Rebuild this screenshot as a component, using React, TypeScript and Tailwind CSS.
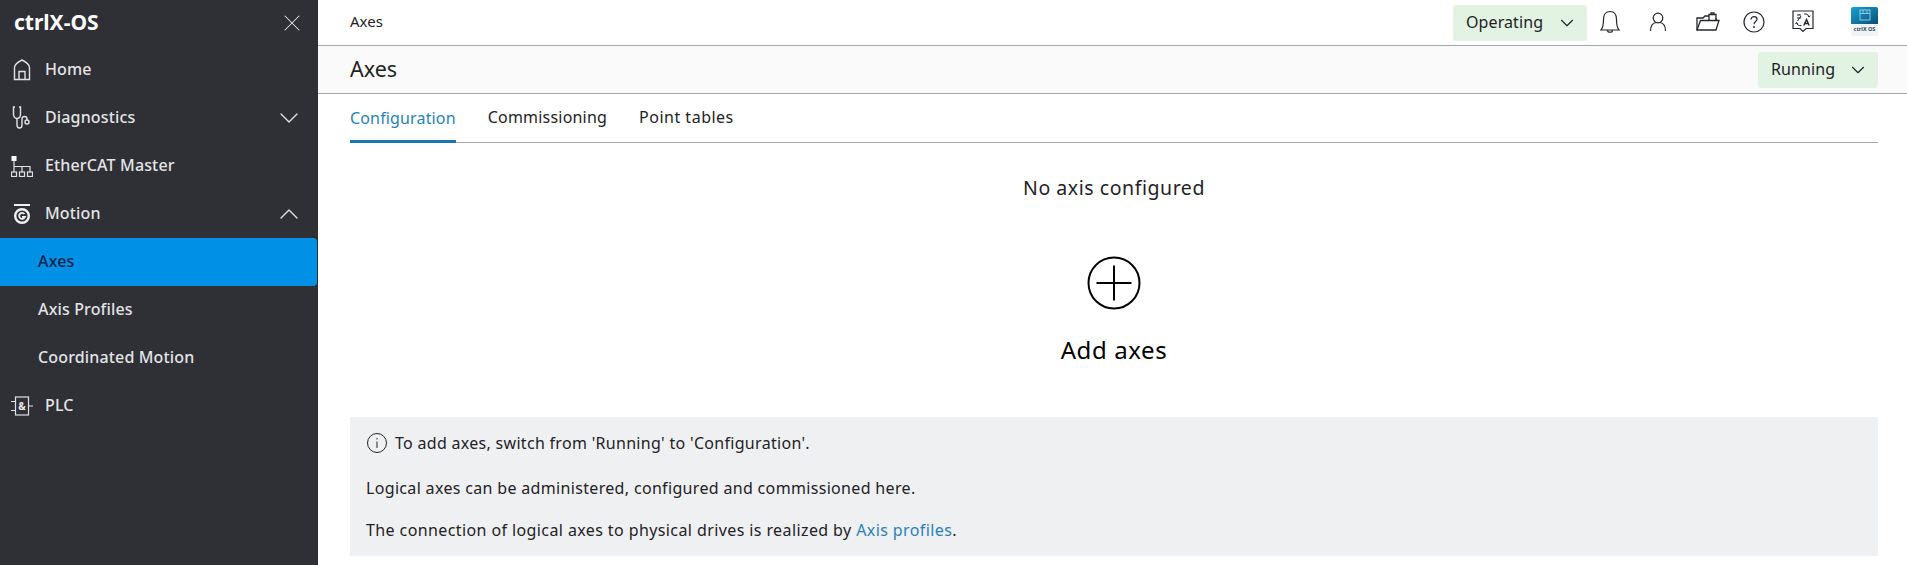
import React from "react";
import { ChevronDown, ChevronUp, X } from "lucide-react";

const font = "font-['Noto_Sans','Liberation_Sans',sans-serif]";

function HomeIcon() {
  return (
    <svg width="20" height="22" viewBox="0 0 20 22" fill="none" stroke="#e0e1e2" strokeWidth="1.4">
      <path d="M2.500 20.500 H17.500 V8.500 C17.500 5 14 3 10 1 C6 3 2.500 5 2.500 8.500 Z" />
      <path d="M7 20.500 V12.500 H13 V20.500" />
    </svg>
  );
}
function DiagIcon() {
  return (
    <svg width="20" height="24" viewBox="0 0 20 24" fill="none" stroke="#e0e1e2" strokeWidth="1.4">
      <path d="M3 1 H1.500 V8 C1.500 11 3 12.500 5 12.500 C7 12.500 8.500 11 8.500 8 V1 H7" />
      <path d="M5 12.500 V19 C5 21 6 22 7.500 22 C9 22 10 21 10 19 V13 C10 11.500 11 10.500 12.500 10.500 C14 10.500 15 11.500 15 13 V14" />
      <circle cx="15" cy="16" r="2" />
    </svg>
  );
}
function EtherIcon() {
  return (
    <svg width="22" height="21" viewBox="0 0 22 21" fill="none" stroke="#e0e1e2" strokeWidth="1.200">
      <rect x="0.500" y="0" width="5" height="5" fill="#ffffff" stroke="none" />
      <path d="M3 5 V16 M3 10.500 H19 V16 M11 10.500 V16" />
      <rect x="0.500" y="16" width="5" height="4.500" />
      <rect x="8.500" y="16" width="5" height="4.500" />
      <rect x="16.500" y="16" width="5" height="4.500" />
    </svg>
  );
}
function MotionIcon() {
  return (
    <svg width="18" height="20" viewBox="0 0 18 20" fill="none" stroke="#f0f0f1">
      <path d="M1 1 H17" strokeWidth="2" />
      <circle cx="9" cy="12" r="6.800" strokeWidth="2.400" />
      <path d="M11.500 10 A3 3 0 1 0 12 12.800 H9" strokeWidth="1.800" />
    </svg>
  );
}
function PlcIcon() {
  return (
    <svg width="22" height="20" viewBox="0 0 22 20" fill="none" stroke="#e0e1e2" strokeWidth="1.200">
      <rect x="4.500" y="1" width="13" height="18" />
      <path d="M0 5.500 H4.500 M0 14.500 H4.500 M17.500 10 H22" />
      <text x="11" y="13.500" textAnchor="middle" fontSize="10" fontWeight="700" fill="#e8e8e9" stroke="none" fontFamily="Noto Sans">&amp;</text>
    </svg>
  );
}
function NavRow({ icon, label, chevron }: { icon: React.ReactNode; label: string; chevron?: "up" | "down" }) {
  return (
    <div className="flex h-12 items-center pl-[10px] pr-[13px]">
      <div className="flex w-[24px] justify-center">{icon}</div>
      <span className="ml-[11px] flex-1 pb-[2px] text-[16px] font-medium tracking-[0.15px] text-[#e4e4e5]">{label}</span>
      {chevron === "down" && <ChevronDown size={32} strokeWidth={1} className="text-[#e0e1e2]" />}
      {chevron === "up" && <ChevronUp size={32} strokeWidth={1} className="text-[#e0e1e2]" />}
    </div>
  );
}
function SubRow({ label, active }: { label: string; active?: boolean }) {
  return (
    <div
      className={
        active
          ? "mr-[1px] flex h-12 items-center rounded-r-[4px] bg-[#0091e6] pb-[2px] pl-[38px] text-[16px] font-medium tracking-[0.15px] text-[#06244a]"
          : "flex h-12 items-center pb-[2px] pl-[38px] text-[16px] font-medium tracking-[0.15px] text-[#e4e4e5]"
      }
    >
      {label}
    </div>
  );
}
function Sidebar() {
  return (
    <aside className="flex w-[318px] shrink-0 flex-col bg-[#2e3036]">
      <div className="flex h-[46px] items-center justify-between pl-[14px] pr-[12px]">
        <span className="text-[21px] font-bold text-white">ctrlX-OS</span>
        <X size={28} strokeWidth={0.9} className="text-[#e0e1e2]" />
      </div>
      <NavRow icon={<HomeIcon />} label="Home" />
      <NavRow icon={<DiagIcon />} label="Diagnostics" chevron="down" />
      <NavRow icon={<EtherIcon />} label="EtherCAT Master" />
      <NavRow icon={<MotionIcon />} label="Motion" chevron="up" />
      <SubRow label="Axes" active />
      <SubRow label="Axis Profiles" />
      <SubRow label="Coordinated Motion" />
      <NavRow icon={<PlcIcon />} label="PLC" />
    </aside>
  );
}
function Dropdown({ label, width }: { label: string; width: string }) {
  return (
    <div className={`flex h-9 items-center justify-between rounded-[3px] bg-[#e2f3e4] pl-[13px] pr-[9px] text-[16px] tracking-[0.1px] text-[#1f2226] ${width}`}>
      <span className="pb-[2px]">{label}</span>
      <ChevronDown size={22} strokeWidth={1.200} />
    </div>
  );
}
function TopIcons() {
  return (
    <div className="ml-[12px] flex items-center">
      <svg width="22" height="24" viewBox="0 0 22 24" fill="none" stroke="#24272b" strokeWidth="1.200" className="mr-[28px] -mt-[2px]">
        <path d="M2 20 C4.500 17 4.500 14 4.500 9.500 C4.500 4.500 7 1.500 11 1.500 C15 1.500 17.500 4.500 17.500 9.500 C17.500 14 17.500 17 20 20 Z" />
        <path d="M8.500 20 C8.500 23 13.500 23 13.500 20" />
      </svg>
      <svg width="18" height="20" viewBox="0 0 18 20" fill="none" stroke="#24272b" strokeWidth="1.200" className="mr-[29px] -mt-[2px]">
        <circle cx="9" cy="6" r="4.800" />
        <path d="M1.500 19 C1.500 14 4 11 7 10.500 M16.500 19 C16.500 14 14 11 11 10.500" />
      </svg>
      <svg width="24" height="20" viewBox="0 0 24 20" fill="none" stroke="#24272b" strokeWidth="1.300" className="mr-[23px] -mt-[2px]">
        <path d="M1 18 V6 H7 L9 4 H13 M20 6 V8" />
        <path d="M1 18 L4.500 8.500 H23 L20 18 Z" />
        <path d="M13 8 V2.500 H20 V8 M15 2.500 V0.800 H18 V2.500" />
      </svg>
      <svg width="22" height="22" viewBox="0 0 22 22" fill="none" stroke="#24272b" strokeWidth="1.200" className="mr-[27px] -mt-[2px]">
        <circle cx="11" cy="11" r="10" />
        <path d="M8 8.500 C8 6.500 9.500 5.700 11 5.700 C12.700 5.700 14 6.800 14 8.300 C14 10.500 11 10.500 11 13.200" />
        <circle cx="11" cy="16" r="0.900" fill="#24272b" stroke="none" />
      </svg>
      <svg width="22" height="23" viewBox="0 0 22 23" fill="none" stroke="#24272b" strokeWidth="1.200" className="mr-[37px] -mt-[2px]">
        <path d="M1 1 H21 V18.500 H14 L11 21.500 L8 18.500 H1 Z" />
        <path d="M5 5 H9 M5 8 H9 M7 4 V5 M5.500 11 L9 6" strokeWidth="1" />
        <path d="M12 4 C15 3.500 17 5 17 7 M17 7 L15.500 5.700 M17 7 L18.300 5.700" strokeWidth="1" />
        <path d="M9.500 15.500 C6.500 16 4.500 14.500 4.500 12.500 M4.500 12.500 L3.300 13.800 M4.500 12.500 L6 13.800" strokeWidth="1" />
        <path d="M11.800 15.500 L14.500 9.500 L17.200 15.500 M12.800 13.500 H16.200" strokeWidth="1.400" />
      </svg>
      <svg width="27" height="29" viewBox="0 0 27 29" className="-mt-[3px] shrink-0">
        <defs>
          <linearGradient id="logoGrad" x1="0" y1="0" x2="1" y2="1">
            <stop offset="0" stopColor="#19a3d6" />
            <stop offset="1" stopColor="#0a4d75" />
          </linearGradient>
        </defs>
        <rect x="0" y="0" width="27" height="29" rx="2" fill="#f2f3f4" />
        <path d="M2 0 H25 A2 2 0 0 1 27 2 V17 H0 V2 A2 2 0 0 1 2 0 Z" fill="url(#logoGrad)" />
        <rect x="9" y="3" width="10" height="10" fill="none" stroke="#a7dbee" strokeWidth="0.800" />
        <path d="M9 6.500 H19 M12 3 V6 M16 3 V6" stroke="#a7dbee" strokeWidth="0.800" />
        <text x="13.500" y="24" textAnchor="middle" fontSize="5.500" fontWeight="700" fill="#2e4a6a" fontFamily="Noto Sans">ctrlX OS</text>
      </svg>
    </div>
  );
}
function Tabs() {
  return (
    <div className="flex h-[49px] border-b border-[#a4a7aa] text-[16px] tracking-[0.15px]">
      <div className="-mb-[1px] flex h-[49px] items-center border-b-[3px] border-[#1a77ad] pt-[1px] text-[#2a82b4]">Configuration</div>
      <div className="ml-[32px] flex items-center pb-[2px] tracking-[0.2px] text-[#1f2226]">Commissioning</div>
      <div className="ml-[32px] flex items-center pb-[2px] tracking-[0.5px] text-[#1f2226]">Point tables</div>
    </div>
  );
}
function Main() {
  return (
    <main className="flex min-w-0 flex-1 flex-col">
      <header className="flex h-[46px] items-center border-b border-[#a4a7aa] pl-[32px] pr-[29px]">
        <span className="flex-1 pb-[2px] text-[15px] text-[#1f2226]">Axes</span>
        <Dropdown label="Operating" width="w-[134px]" />
        <TopIcons />
      </header>
      <div className="flex h-[48px] items-center justify-between border-b border-[#a4a7aa] bg-[#fafafa] pl-[32px] pr-[29px]">
        <span className="text-[21.500px] text-[#1f2226]">Axes</span>
        <Dropdown label="Running" width="w-[120px]" />
      </div>
      <div className="flex flex-1 flex-col pl-[32px] pr-[29px]">
        <Tabs />
        <div className="mt-[31px] text-center text-[19.500px] leading-[28px] tracking-[0.55px] text-[#1f2226]">No axis configured</div>
        <div className="mt-[54px] flex flex-col items-center">
          <svg width="54" height="54" viewBox="0 0 54 54" fill="none" stroke="#000" strokeWidth="2">
            <circle cx="27" cy="27" r="25.500" />
            <path d="M27 9.500 V44.500 M9.500 27 H44.500" />
          </svg>
          <div className="mt-[23px] text-[24px] leading-[34px] tracking-[0.6px] text-black">Add axes</div>
        </div>
        <div className="mt-[50px] h-[139px] bg-[#eff0f2] pl-[16px] pt-[14px] text-[16px] text-[#1f2226]">
          <div className="flex h-[24px] items-center tracking-[0.3px]">
            <svg width="20" height="20" viewBox="0 0 20 20" fill="none" stroke="#24272b" strokeWidth="1" className="mr-[8px] ml-[1px]">
              <circle cx="10" cy="10" r="9.500" />
              <path d="M10 8.500 V15 M10 5 V6.500" />
            </svg>
            To add axes, switch from 'Running' to 'Configuration'.
          </div>
          <div className="mt-[21px] h-[24px] leading-[24px] tracking-[0.33px]">Logical axes can be administered, configured and commissioned here.</div>
          <div className="mt-[18px] h-[24px] leading-[24px] tracking-[0.4px]">
            The connection of logical axes to physical drives is realized by <span className="text-[#2a82b4]">Axis profiles</span>.
          </div>
        </div>
      </div>
    </main>
  );
}
export default function App() {
  return (
    <div className={`flex h-[565px] w-[1907px] overflow-hidden bg-white ${font}`}>
      <Sidebar />
      <Main />
    </div>
  );
}
